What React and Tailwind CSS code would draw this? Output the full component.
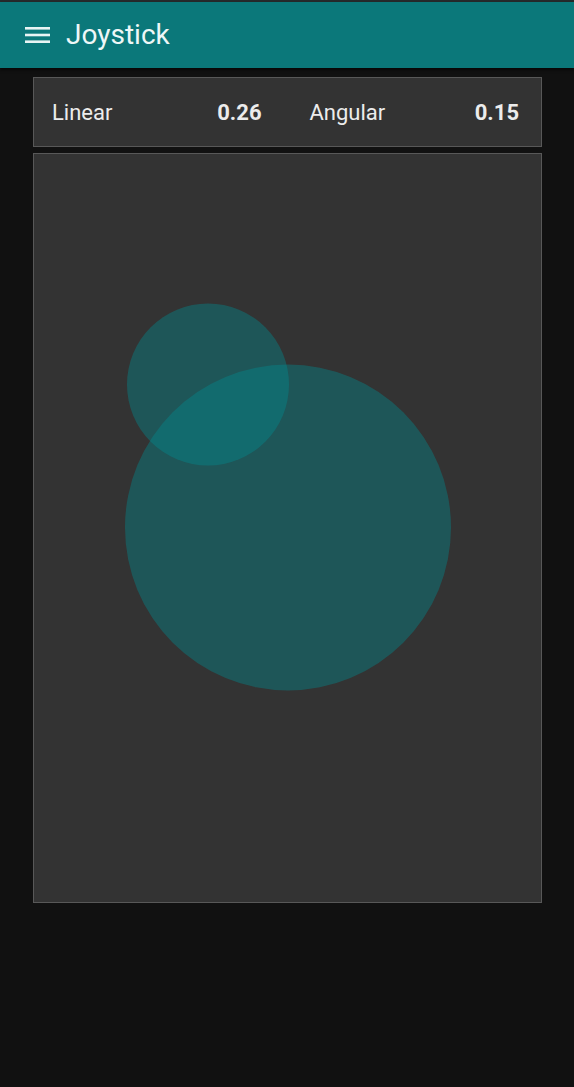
import React from "react";

export default function App() {
  return (
    <div className="min-h-[1087px] w-full bg-[#111111]" style={{ fontFamily: "Roboto, 'Liberation Sans', sans-serif" }}>
      <div className="h-[2px] bg-[#262a2b]" />
      <header className="flex h-[66px] items-center bg-[#0b787a] pl-[25px] shadow-[0_2px_3px_rgba(0,0,0,0.6)]">
        <svg width="26" height="20" viewBox="0 0 26 20" className="mr-[15px]">
          <rect x="0" y="2" width="25" height="2.6" fill="#e8f4f4" />
          <rect x="0" y="8.7" width="25" height="2.6" fill="#e8f4f4" />
          <rect x="0" y="15.4" width="25" height="2.6" fill="#e8f4f4" />
        </svg>
        <h1 className="text-[28px] leading-none text-[#eef7f7]">Joystick</h1>
      </header>
      <main className="flex flex-col gap-[6px] pl-[33px] pr-[32px] pt-[9px]">
        <div className="grid h-[70px] grid-cols-2 items-center gap-[48px] border border-[#585858] bg-[#333333] pl-[18px] pr-[22px] text-[22px] text-[#ececec]">
          <div className="flex items-center justify-between">
            <span>Linear</span>
            <span className="font-bold">0.26</span>
          </div>
          <div className="flex items-center justify-between">
            <span>Angular</span>
            <span className="font-bold">0.15</span>
          </div>
        </div>
        <div className="relative h-[750px] border border-[#585858] bg-[#333333]">
          <svg className="absolute left-0 top-0" width="507" height="748" viewBox="0 0 507 748">
            <circle cx="254" cy="373.5" r="163" fill="rgb(0,141,146)" fillOpacity="0.4" />
            <circle cx="174" cy="230.5" r="81" fill="rgb(0,141,146)" fillOpacity="0.4" />
          </svg>
        </div>
      </main>
    </div>
  );
}
